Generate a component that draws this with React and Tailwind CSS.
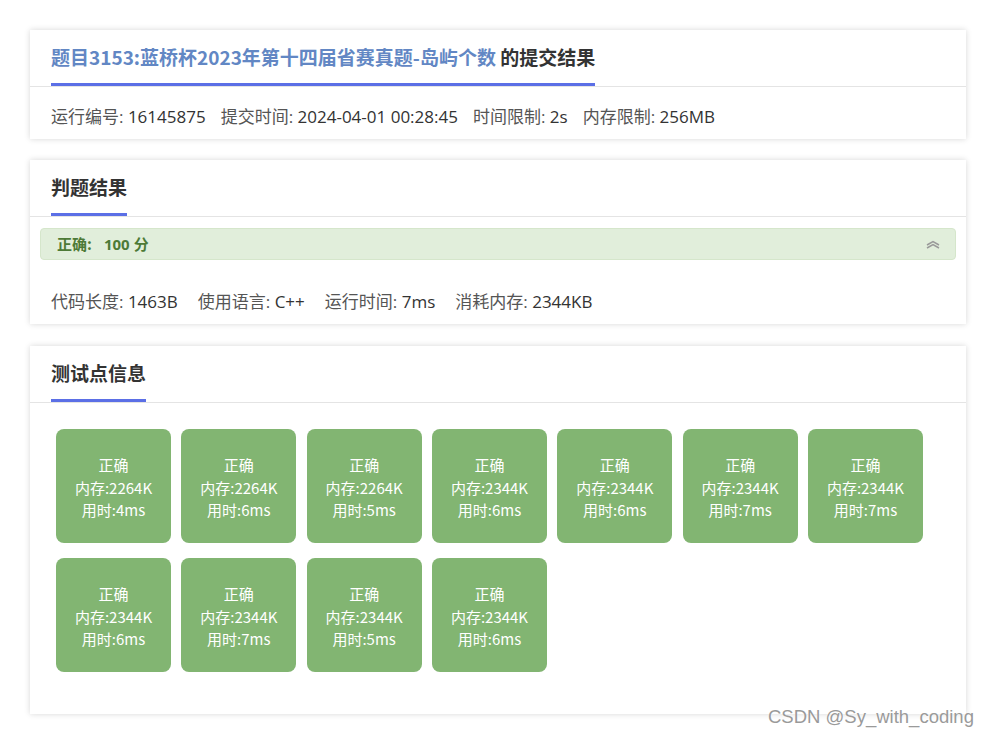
import React from "react";

const tests = [
  { mem: "2264K", time: "4ms" },
  { mem: "2264K", time: "6ms" },
  { mem: "2264K", time: "5ms" },
  { mem: "2344K", time: "6ms" },
  { mem: "2344K", time: "6ms" },
  { mem: "2344K", time: "7ms" },
  { mem: "2344K", time: "7ms" },
  { mem: "2344K", time: "6ms" },
  { mem: "2344K", time: "7ms" },
  { mem: "2344K", time: "5ms" },
  { mem: "2344K", time: "6ms" },
];

const font = { fontFamily: '"Open Sans", "Noto Sans CJK SC", sans-serif' };
const cjk = { fontFamily: '"Noto Sans CJK SC", "Noto Sans", sans-serif' };

const CardHeader = ({ children }) => (
  <div className="h-[57px] flex items-end px-[21px] border-b border-[#e4e4e4]" style={cjk}>
    <div className="border-b-[3px] border-[#5b6fe6] pb-[13px] leading-[26px] font-bold text-[19px] text-[#333]">
      {children}
    </div>
  </div>
);

const Info = ({ items, gap }) => (
  <div className={`flex text-[17px] leading-[24px] px-[21px] ${gap}`}>
    {items.map(([k, v]) => (
      <span key={k} className="text-[#555]">
        {k}: <span className="text-[#333]">{v}</span>
      </span>
    ))}
  </div>
);

const Card = ({ children }) => (
  <div className="bg-white shadow-[0_0_6px_rgba(0,0,0,0.16)]">{children}</div>
);

export default function App() {
  return (
    <div className="relative bg-white min-h-[736px] pt-[30px] pl-[30px] pb-[22px]" style={font}>
      <div className="w-[936px] flex flex-col">
        {/* submission */}
        <Card>
          <CardHeader>
            <span className="text-[#6287c4]">题目3153:蓝桥杯2023年第十四届省赛真题-岛屿个数</span> 的提交结果
          </CardHeader>
          <div className="pt-[18px] pb-[10px]">
            <Info
              gap="gap-[15px]"
              items={[
                ["运行编号", "16145875"],
                ["提交时间", "2024-04-01 00:28:45"],
                ["时间限制", "2s"],
                ["内存限制", "256MB"],
              ]}
            />
          </div>
        </Card>

        {/* judge result */}
        <div className="mt-[21px]">
          <Card>
            <CardHeader>判题结果</CardHeader>
            <div className="mx-[10px] mt-[11px] h-[32px] rounded-[4px] bg-[#e1eedb] border border-[#d5e6cb] flex items-center justify-between pl-[16px] pr-[14px]">
              <span className="text-[15px] font-bold text-[#4d7a37] flex items-center">
                <span style={cjk}>正确:</span>
                <span className="ml-[12px]">100</span>
                <span className="ml-[4px]" style={cjk}>分</span>
              </span>
              <svg width="16" height="10" viewBox="0 0 16 10" fill="none" stroke="#999" strokeWidth="1.5">
                <path d="M2 6 L8 2.5 L14 6" />
                <path d="M2 9 L8 5.5 L14 9" />
              </svg>
            </div>
            <div className="pt-[30px] pb-[10px]">
              <Info
                gap="gap-[20px]"
                items={[
                  ["代码长度", "1463B"],
                  ["使用语言", "C++"],
                  ["运行时间", "7ms"],
                  ["消耗内存", "2344KB"],
                ]}
              />
            </div>
          </Card>
        </div>

        {/* test points */}
        <div className="mt-[22px]">
          <Card>
            <CardHeader>测试点信息</CardHeader>
            <div
              className="flex flex-wrap gap-x-[10.33px] gap-y-[15px] pt-[26px] pb-[42px] px-[26px]"
              style={cjk}
            >
              {tests.map((t, i) => (
                <div
                  key={i}
                  className="w-[115px] h-[114px] rounded-[8px] bg-[#82b572] text-white text-[15px] leading-[22.5px] pt-[4px] flex flex-col items-center justify-center"
                >
                  <span>正确</span>
                  <span>内存:{t.mem}</span>
                  <span>用时:{t.time}</span>
                </div>
              ))}
            </div>
          </Card>
        </div>
      </div>

      <div
        className="absolute left-[768px] top-[705px] text-[18.5px] leading-[24px] text-[#9a9a9a]"
        style={{ fontFamily: '"Liberation Sans", Arial, sans-serif', textShadow: "0 0 2px #fff" }}
      >
        CSDN @Sy_with_coding
      </div>
    </div>
  );
}
